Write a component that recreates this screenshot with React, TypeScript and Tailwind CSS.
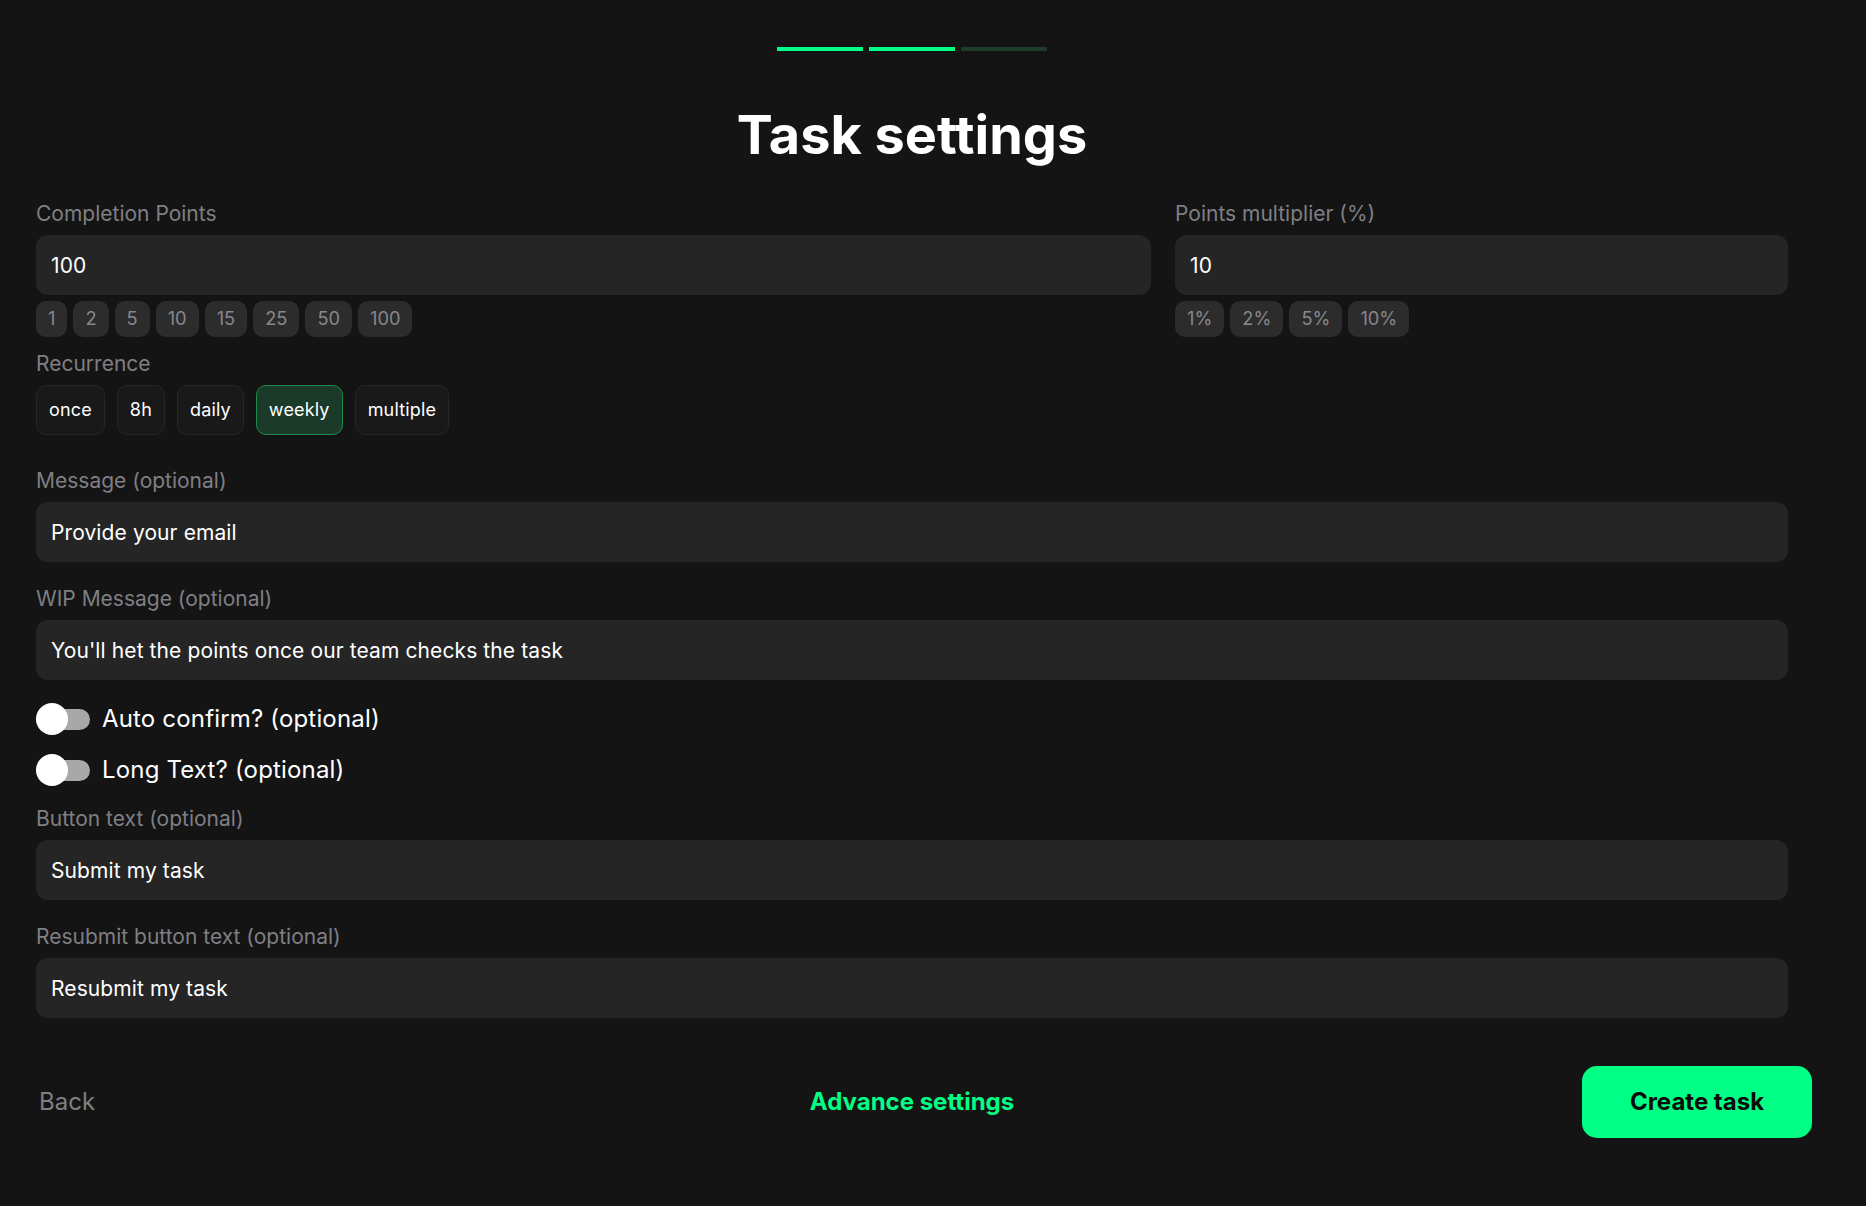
import type { ReactNode } from "react";

const pointOptions = ["1", "2", "5", "10", "15", "25", "50", "100"];
const multiplierOptions = ["1%", "2%", "5%", "10%"];
const recurrenceOptions = ["once", "8h", "daily", "weekly", "multiple"];

function Label({ children }: { children: ReactNode }) {
  return <label className="block pt-px text-[21px] leading-[23px] text-[#7f7f84]">{children}</label>;
}

function TextField({ value }: { value: string }) {
  return (
    <input
      readOnly
      value={value}
      className="mt-2.5 block h-[60px] w-full rounded-xl bg-[#252525] px-[15px] pt-px text-[21px] font-normal tracking-[0.005em] text-white outline-none"
    />
  );
}

function Chips({ options }: { options: string[] }) {
  return (
    <div className="mt-1.5 flex gap-1.5">
      {options.map((o) => (
        <button key={o} className="h-9 rounded-[10px] bg-[#2c2c2c] px-3 pb-px text-[18.25px] leading-none text-[#87878c]">
          {o}
        </button>
      ))}
    </div>
  );
}

function Toggle({ label }: { label: string }) {
  return (
    <div className="flex h-8 items-center gap-3">
      <div className="relative h-[21px] w-[54px] rounded-full bg-[#a8a8a8]">
        <span className="absolute left-0 top-[-5.5px] h-8 w-8 rounded-full bg-white" />
      </div>
      <span className="text-[24px] font-normal leading-8 tracking-[0.007em] text-white">{label}</span>
    </div>
  );
}

export default function App() {
  return (
    <div className="min-h-screen bg-[#141414] font-['Inter',sans-serif]">
      <div className="w-[1824px] pt-[47px]">
        <div className="flex justify-center gap-1.5">
          <div className="h-1 w-[86px] bg-[#00ff85]" />
          <div className="h-1 w-[86px] bg-[#00ff85]" />
          <div className="h-1 w-[86px] bg-[#1c3d2a]" />
        </div>
        <h1 className="mt-[50px] text-center text-[54px] font-bold leading-[68px] text-white">Task settings</h1>

        <div className="mt-8 px-9">
          <div className="flex gap-6">
            <div className="w-[1115px]">
              <Label>Completion Points</Label>
              <TextField value="100" />
              <Chips options={pointOptions} />
            </div>
            <div className="w-[613px]">
              <Label>Points multiplier (%)</Label>
              <TextField value="10" />
              <Chips options={multiplierOptions} />
            </div>
          </div>

          <div className="mt-3.5">
            <Label>Recurrence</Label>
            <div className="mt-2.5 flex gap-3">
              {recurrenceOptions.map((r) => (
                <button
                  key={r}
                  className={
                    r === "weekly"
                      ? "h-[50px] rounded-[10px] border border-[#1f8a4c] bg-[#1c3a29] px-3 pb-0.5 text-[18px] font-normal tracking-[0.009em] text-white"
                      : "h-[50px] rounded-[10px] border border-[#262626] bg-[#191919] px-3 pb-0.5 text-[18px] font-normal tracking-[0.009em] text-white"
                  }
                >
                  {r}
                </button>
              ))}
            </div>
          </div>

          <div className="mt-[33px]">
            <Label>Message (optional)</Label>
            <TextField value="Provide your email" />
          </div>
          <div className="mt-6">
            <Label>WIP Message (optional)</Label>
            <TextField value="You'll het the points once our team checks the task" />
          </div>

          <div className="mt-[23px] flex flex-col gap-[19px]">
            <Toggle label="Auto confirm? (optional)" />
            <Toggle label="Long Text? (optional)" />
          </div>

          <div className="mt-5">
            <Label>Button text (optional)</Label>
            <TextField value="Submit my task" />
          </div>
          <div className="mt-6">
            <Label>Resubmit button text (optional)</Label>
            <TextField value="Resubmit my task" />
          </div>
        </div>

        <div className="mt-12 grid grid-cols-[1fr_auto_1fr] items-center px-3">
          <button className="ml-[27px] justify-self-start text-[24px] text-[#7f7f84]">Back</button>
          <button className="text-[24px] font-bold text-[#00ff85]">Advance settings</button>
          <button className="h-[72px] w-[230px] justify-self-end rounded-[15px] bg-[#00ff85] text-[24px] font-bold text-[#0a0a0a]">
            Create task
          </button>
        </div>
      </div>
    </div>
  );
}
